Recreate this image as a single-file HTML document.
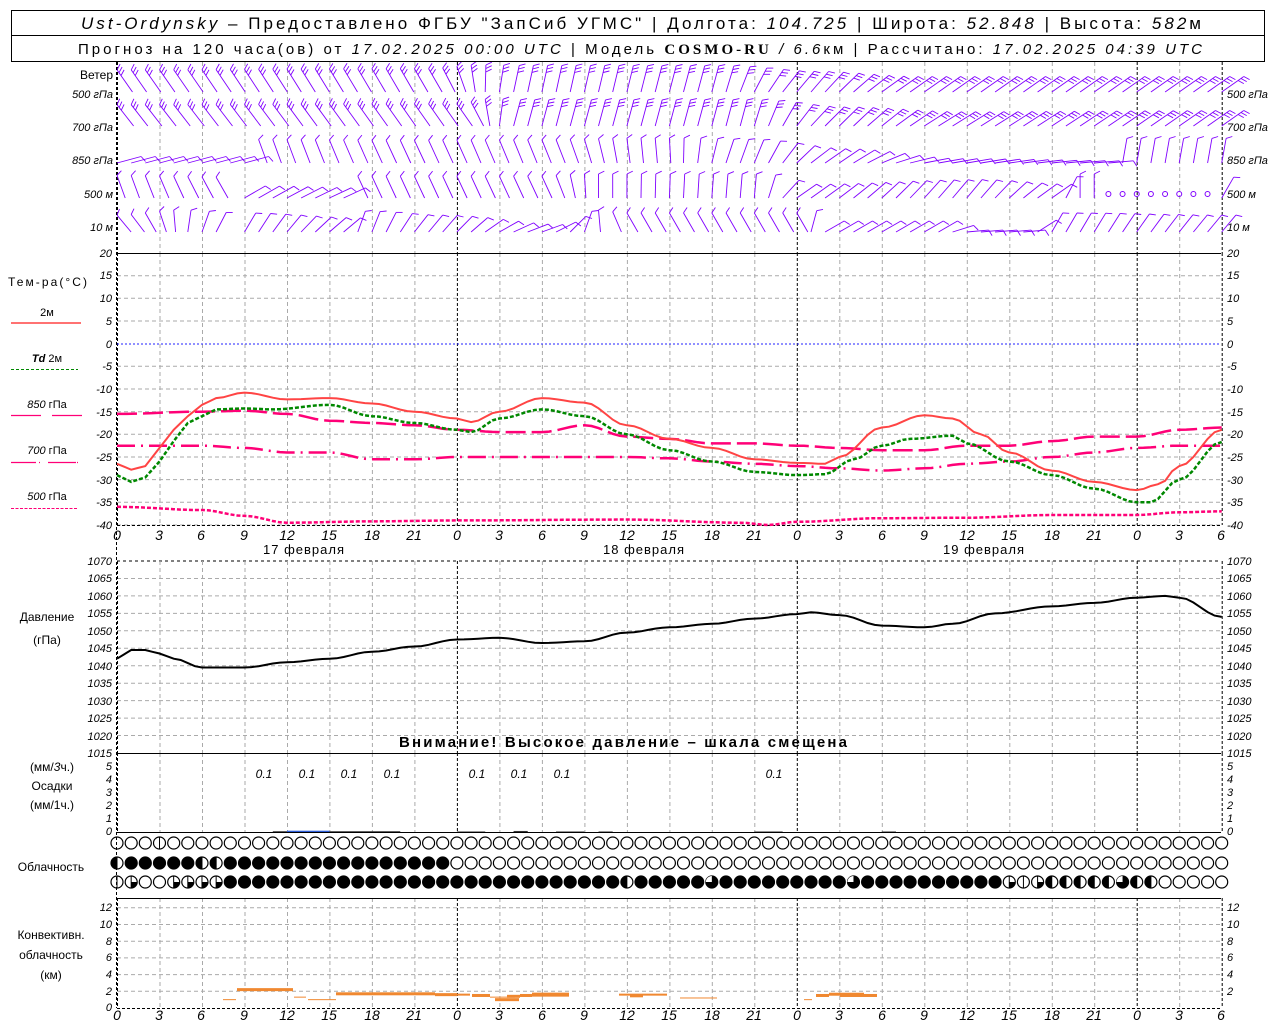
<!DOCTYPE html>
<html><head><meta charset="utf-8">
<style>
html,body{margin:0;padding:0;background:#fff;}
body{width:1280px;height:1024px;overflow:hidden;position:relative;font-family:"Liberation Sans","DejaVu Sans",sans-serif;}
svg{position:absolute;left:0;top:0;}
text{font-family:"Liberation Sans","DejaVu Sans",sans-serif;fill:#000;}
.it{font-style:italic;}
.ax{font-size:11px;font-style:italic;}
.lb{font-size:12px;}
</style></head><body>
<svg id="s" width="1280" height="1024" viewBox="0 0 1280 1024" xmlns="http://www.w3.org/2000/svg">
<g id="g"></g>
<rect x="11.5" y="10.5" width="1253" height="51" fill="none" stroke="#000"/>
<line x1="11" y1="35.5" x2="1265" y2="35.5" stroke="#000"/>
<text x="81" y="29" font-size="17" textLength="1120" lengthAdjust="spacing"><tspan class="it">Ust-Ordynsky</tspan> – Предоставлено ФГБУ "ЗапСиб УГМС" | Долгота: <tspan class="it">104.725</tspan> | Широта: <tspan class="it">52.848</tspan> | Высота: <tspan class="it">582</tspan>м</text>
<text x="78" y="54" font-size="15" textLength="1124" lengthAdjust="spacing">Прогноз на 120 часа(ов) от <tspan class="it">17.02.2025 00:00 UTC</tspan> | Модель <tspan font-weight="bold" font-family="Liberation Serif">COSMO-RU</tspan> <tspan class="it">/ 6.6</tspan>км | Рассчитано: <tspan class="it">17.02.2025 04:39 UTC</tspan></text>

<text x="113" y="79" class="lb" text-anchor="end">Ветер</text>
<g class="ax">
<text x="113" y="98" text-anchor="end">500 гПа</text><text x="113" y="131" text-anchor="end">700 гПа</text><text x="113" y="164" text-anchor="end">850 гПа</text><text x="113" y="198" text-anchor="end">500 м</text><text x="113" y="231" text-anchor="end">10   м</text>
<text x="1227" y="98">500 гПа</text><text x="1227" y="131">700 гПа</text><text x="1227" y="164">850 гПа</text><text x="1227" y="198">500 м</text><text x="1227" y="231">10   м</text>
</g>

<text x="8" y="286" class="lb" textLength="79" lengthAdjust="spacing">Тем-ра(°C)</text>
<text x="47" y="316" font-size="11" text-anchor="middle">2м</text>
<line x1="11" y1="323" x2="81" y2="323" stroke="#f44" stroke-width="1.5"/>
<text x="47" y="362" font-size="11" text-anchor="middle"><tspan class="it" font-weight="bold">Td</tspan>  2м</text>
<line x1="11" y1="369.5" x2="78" y2="369.5" stroke="#080" stroke-dasharray="3,2"/>
<text x="47" y="408" font-size="11" text-anchor="middle"><tspan class="it">850</tspan> гПа</text>
<path d="M11 415.5H41M52 415.5H82" stroke="#f07" stroke-width="1.2"/>
<text x="47" y="454" font-size="11" text-anchor="middle"><tspan class="it">700</tspan> гПа</text>
<path d="M11 462.5H36M39 462.5H40M48 462.5H76M77 462.5H78" stroke="#f07" stroke-width="1.2"/>
<text x="47" y="500" font-size="11" text-anchor="middle"><tspan class="it">500</tspan> гПа</text>
<line x1="11" y1="508.5" x2="78" y2="508.5" stroke="#f07" stroke-dasharray="3,1.5"/>

<g font-size="13" letter-spacing="1">
<text x="304" y="554" text-anchor="middle">17 февраля</text>
<text x="644" y="554" text-anchor="middle">18 февраля</text>
<text x="984" y="554" text-anchor="middle">19 февраля</text>
</g>
<text x="47" y="621" class="lb" text-anchor="middle">Давление</text>
<text x="47" y="644" class="lb" text-anchor="middle">(гПа)</text>
<text x="399" y="747" font-size="15" font-weight="bold" textLength="448" lengthAdjust="spacing">Внимание! Высокое давление – шкала смещена</text>
<text x="52" y="771" class="lb" text-anchor="middle">(мм/<tspan class="it">3</tspan>ч.)</text>
<text x="52" y="790" class="lb" text-anchor="middle">Осадки</text>
<text x="52" y="809" class="lb" text-anchor="middle">(мм/1ч.)</text>
<g font-size="12" class="it" text-anchor="middle">
<text x="264" y="778">0.1</text><text x="307" y="778">0.1</text><text x="349" y="778">0.1</text><text x="392" y="778">0.1</text><text x="477" y="778">0.1</text><text x="519" y="778">0.1</text><text x="562" y="778">0.1</text><text x="774" y="778">0.1</text>
</g>
<text x="51" y="871" class="lb" text-anchor="middle">Облачность</text>
<text x="51" y="939" class="lb" text-anchor="middle">Конвективн.</text>
<text x="51" y="959" class="lb" text-anchor="middle">облачность</text>
<text x="51" y="979" class="lb" text-anchor="middle">(км)</text>
<g style="font-size:14px;font-style:italic" text-anchor="middle">
<text x="117" y="540">0</text><text x="159" y="540">3</text><text x="201" y="540">6</text><text x="244" y="540">9</text><text x="287" y="540">12</text><text x="329" y="540">15</text><text x="372" y="540">18</text><text x="414" y="540">21</text><text x="457" y="540">0</text><text x="499" y="540">3</text><text x="542" y="540">6</text><text x="584" y="540">9</text><text x="627" y="540">12</text><text x="669" y="540">15</text><text x="712" y="540">18</text><text x="754" y="540">21</text><text x="797" y="540">0</text><text x="839" y="540">3</text><text x="882" y="540">6</text><text x="924" y="540">9</text><text x="967" y="540">12</text><text x="1009" y="540">15</text><text x="1052" y="540">18</text><text x="1094" y="540">21</text><text x="1137" y="540">0</text><text x="1179" y="540">3</text><text x="1221" y="540">6</text>
<text x="117" y="1020">0</text><text x="159" y="1020">3</text><text x="201" y="1020">6</text><text x="244" y="1020">9</text><text x="287" y="1020">12</text><text x="329" y="1020">15</text><text x="372" y="1020">18</text><text x="414" y="1020">21</text><text x="457" y="1020">0</text><text x="499" y="1020">3</text><text x="542" y="1020">6</text><text x="584" y="1020">9</text><text x="627" y="1020">12</text><text x="669" y="1020">15</text><text x="712" y="1020">18</text><text x="754" y="1020">21</text><text x="797" y="1020">0</text><text x="839" y="1020">3</text><text x="882" y="1020">6</text><text x="924" y="1020">9</text><text x="967" y="1020">12</text><text x="1009" y="1020">15</text><text x="1052" y="1020">18</text><text x="1094" y="1020">21</text><text x="1137" y="1020">0</text><text x="1179" y="1020">3</text><text x="1221" y="1020">6</text>
</g>
<g class="ax">
<text x="112" y="257" text-anchor="end">20</text><text x="112" y="302" text-anchor="end">10</text><text x="112" y="279" text-anchor="end">15</text><text x="112" y="325" text-anchor="end">5</text><text x="112" y="348" text-anchor="end">0</text><text x="112" y="370" text-anchor="end">-5</text><text x="112" y="393" text-anchor="end">-10</text><text x="112" y="416" text-anchor="end">-15</text><text x="112" y="438" text-anchor="end">-20</text><text x="112" y="461" text-anchor="end">-25</text><text x="112" y="484" text-anchor="end">-30</text><text x="112" y="506" text-anchor="end">-35</text><text x="112" y="529" text-anchor="end">-40</text>
<text x="1227" y="257">20</text><text x="1227" y="279">15</text><text x="1227" y="302">10</text><text x="1227" y="325">5</text><text x="1227" y="348">0</text><text x="1227" y="370">-5</text><text x="1227" y="393">-10</text><text x="1227" y="416">-15</text><text x="1227" y="438">-20</text><text x="1227" y="461">-25</text><text x="1227" y="484">-30</text><text x="1227" y="506">-35</text><text x="1227" y="529">-40</text>
<text x="112" y="565" text-anchor="end">1070</text><text x="112" y="582" text-anchor="end">1065</text><text x="112" y="600" text-anchor="end">1060</text><text x="112" y="617" text-anchor="end">1055</text><text x="112" y="635" text-anchor="end">1050</text><text x="112" y="652" text-anchor="end">1045</text><text x="112" y="670" text-anchor="end">1040</text><text x="112" y="687" text-anchor="end">1035</text><text x="112" y="705" text-anchor="end">1030</text><text x="112" y="722" text-anchor="end">1025</text><text x="112" y="740" text-anchor="end">1020</text><text x="112" y="757" text-anchor="end">1015</text>
<text x="1227" y="565">1070</text><text x="1227" y="582">1065</text><text x="1227" y="600">1060</text><text x="1227" y="617">1055</text><text x="1227" y="635">1050</text><text x="1227" y="652">1045</text><text x="1227" y="670">1040</text><text x="1227" y="687">1035</text><text x="1227" y="705">1030</text><text x="1227" y="722">1025</text><text x="1227" y="740">1020</text><text x="1227" y="757">1015</text>
<text x="112" y="770" text-anchor="end">5</text><text x="112" y="783" text-anchor="end">4</text><text x="112" y="796" text-anchor="end">3</text><text x="112" y="809" text-anchor="end">2</text><text x="112" y="822" text-anchor="end">1</text><text x="112" y="835" text-anchor="end">0</text>
<text x="1227" y="770">5</text><text x="1227" y="783">4</text><text x="1227" y="796">3</text><text x="1227" y="809">2</text><text x="1227" y="822">1</text><text x="1227" y="835">0</text>
<text x="112" y="911" text-anchor="end">12</text><text x="112" y="928" text-anchor="end">10</text><text x="112" y="945" text-anchor="end">8</text><text x="112" y="961" text-anchor="end">6</text><text x="112" y="978" text-anchor="end">4</text><text x="112" y="995" text-anchor="end">2</text><text x="112" y="1011" text-anchor="end">0</text>
<text x="1227" y="911">12</text><text x="1227" y="928">10</text><text x="1227" y="945">8</text><text x="1227" y="961">6</text><text x="1227" y="978">4</text><text x="1227" y="995">2</text>
</g>
</svg>
<script>
(function(){
var g=document.getElementById("g"),out=[];
function X(h){return 117+h*14.163;}
function L(x1,y1,x2,y2,st){out.push('<line x1="'+x1.toFixed(1)+'" y1="'+y1.toFixed(1)+'" x2="'+x2.toFixed(1)+'" y2="'+y2.toFixed(1)+'" '+st+'/>');}
var panels=[[62,253],[253,525],[561,753],[753,832],[898,1008]];
var gray='stroke="#aaa" stroke-dasharray="4,3"';
for(var t=15;t>=-40;t-=5){var y=253+(20-t)*4.533;if(t!=0)L(117,y,1221,y,gray);}
for(var p=1065;p>1015;p-=5){var y=561+(1070-p)*3.4909;L(117,y,1221,y,gray);}
L(117,561,1221,561,'stroke="#000" stroke-dasharray="3,3"');
for(var k=2;k<=12;k+=2){var y=1008-k*8.35;L(117,y,1221,y,gray);}
panels.forEach(function(pn){
 for(var h=0;h<=78;h+=3){
  var day=(h%24==0)||h==78;
  L(X(h)+.5,pn[0],X(h)+.5,pn[1],day?'stroke="#000" stroke-dasharray="3,2"':gray);
 }
});
L(117,344,1221,344,'stroke="#22f" stroke-dasharray="2,2"');
L(117,253.5,1221,253.5,'stroke="#000"');
L(117,753.5,1221,753.5,'stroke="#000"');
L(117,898.5,1221,898.5,'stroke="#000"');
L(117,525.5,1221,525.5,'stroke="#000" stroke-dasharray="3,2"');
L(117,832.5,1221,832.5,'stroke="#000"');
L(117,1008.5,1221,1008.5,'stroke="#000" stroke-dasharray="3,2"');
function interp(d,h){for(var i=0;i<d.length-1;i++){if(h>=d[i][0]&&h<=d[i+1][0]){var f=(h-d[i][0])/(d[i+1][0]-d[i][0]);var s=(1-Math.cos(f*Math.PI))/2;return d[i][1]+(d[i+1][1]-d[i][1])*s;}}return d[d.length-1][1];}
function curve(d,Y,st){var s='';for(var h=0;h<=78;h+=0.5){s+=(h?'L':'M')+X(h).toFixed(1)+' '+Y(interp(d,h)).toFixed(1);}out.push('<path d="'+s+'" fill="none" '+st+'/>');}
function TY(t){return 253+(20-t)*4.533;}
var T2=[[0,-26.5],[1,-27.8],[2,-27],[3,-23],[4,-19],[5,-16],[6,-13.5],[7,-12],[9,-10.8],[12,-12.3],[15,-12],[18,-13.2],[21,-15],[24,-16.5],[25,-17.3],[27,-15],[30,-12],[33,-13],[36,-18],[39,-21],[42,-23],[45,-25.5],[48,-26.3],[50,-26.5],[51,-25],[54,-18.5],[57,-15.8],[59,-16.5],[61,-20],[63,-24],[66,-28],[69,-30.5],[72,-32.3],[73.6,-31],[75,-27],[78,-19]];
var TD=[[0,-29],[1,-30.5],[2,-29.5],[3,-26],[4,-21.5],[5,-17.5],[6,-16],[7,-14.5],[9,-14.3],[11,-14.5],[15,-13.5],[18,-16],[21,-17.5],[24,-19],[25,-19.5],[27,-16.5],[30,-14.5],[33,-16],[36,-20],[39,-23.5],[42,-26],[45,-28.3],[48,-29],[50,-28.8],[52,-25.5],[54,-22.5],[56,-21],[59,-20.3],[60,-22],[63,-26],[66,-29],[69,-32],[72,-35],[73,-35],[75,-30],[78,-21.7]];
var H850=[[0,-15.5],[6,-15],[9,-14.8],[12,-15.5],[15,-17],[18,-17.5],[21,-18],[24,-19],[27,-19.5],[30,-19.5],[33,-18],[36,-20.5],[39,-21],[42,-22],[45,-22],[48,-22.5],[51,-23],[54,-23.5],[57,-23.5],[60,-22.5],[63,-22.5],[66,-21.5],[69,-20.5],[72,-20.5],[75,-19],[78,-18.5]];
var H700=[[0,-22.5],[6,-22.5],[9,-23],[12,-24],[15,-24],[18,-25.5],[21,-25.5],[24,-25],[36,-25],[39,-25.3],[42,-26],[45,-26.5],[48,-27],[51,-27.5],[54,-28],[57,-27.5],[60,-26.5],[63,-26],[66,-25],[69,-24],[72,-23],[75,-22.5],[78,-22.5]];
var H500=[[0,-36],[6,-36.7],[9,-38],[12,-39.5],[18,-39.2],[24,-39],[36,-38.8],[44,-39.5],[46,-40],[48,-39.3],[54,-38.5],[60,-38.4],[66,-37.8],[72,-37.8],[75,-37.2],[78,-37]];
curve(H500,TY,'stroke="#f07" stroke-width="2.5" stroke-dasharray="4,2"');
curve(H700,TY,'stroke="#f07" stroke-width="2.5" stroke-dasharray="18,6,2,6"');
curve(H850,TY,'stroke="#f07" stroke-width="2.5" stroke-dasharray="20,6"');
curve(TD,TY,'stroke="#080" stroke-width="2.5" stroke-dasharray="4,2"');
curve(T2,TY,'stroke="#f44" stroke-width="2"');
var PR=[[0,1042],[1,1044.5],[2,1044.5],[3,1043.5],[4,1042],[6,1039.5],[9,1039.5],[12,1041],[15,1042],[18,1044],[21,1045.5],[24,1047.5],[27,1048],[30,1046.5],[33,1047],[36,1049.5],[39,1051],[42,1052],[45,1053.5],[48,1054.8],[49,1055.3],[51,1054.5],[54,1051.5],[57,1051],[59,1052],[62,1055],[66,1057],[69,1058],[72,1059.5],[74,1060],[75,1059.5],[78,1054]];
curve(PR,function(p){return 561+(1070-p)*3.4909;},'stroke="#000" stroke-width="2"');
[[11,12,0.3],[12,15,0.5],[15,20,0.3],[24,26,0.2],[28,29,0.4],[31,33,0.2],[34,35,0.2],[45,47,0.2],[54,55,0.2]].forEach(function(b){out.push('<rect x="'+X(b[0])+'" y="'+(832-b[2]*2.6)+'" width="'+(X(b[1])-X(b[0]))+'" height="'+(b[2]*2.6)+'" fill="'+(b[2]>0.4?'#2a5bd7':'#333')+'"/>');});
[[223,236,1.0,1],[237,293,2.2,3],[294,306,1.3,1],[308,336,1.0,1],[336,435,1.7,3],[435,457,1.6,3],[457,470,1.6,2],[472,490,1.5,3],[490,515,1.3,1],[495,519,1.0,3],[507,520,1.4,3],[520,532,1.5,3],[532,569,1.6,4],[619,643,1.6,2],[630,643,1.4,2],[643,667,1.6,2],[680,717,1.2,1],[804,812,1.0,1],[816,829,1.5,3],[829,864,1.65,3],[840,877,1.5,3]].forEach(function(b){var y=1008-b[2]*8.35;out.push('<rect x="'+b[0]+'" y="'+(y-b[3]/2)+'" width="'+(b[1]-b[0])+'" height="'+b[3]+'" fill="#f08830"/>');});
var r1='',r2='',r3='';
for(var i=0;i<79;i++){r1+=(i==3?'L':'E');}
for(i=0;i<79;i++){r2+=(i<24?((i==0||i==6||i==7)?'H':'F'):'E');}
r3='LQEEQQQQ'; for(i=8;i<63;i++){r3+=(i==36?'H':(i==42||i==52)?'C':'F');}
r3+='QLQHHHHHCHHEEEE';
function circ(cx,cy,t){var r=6;var s='<circle cx="'+cx.toFixed(1)+'" cy="'+cy+'" r="'+r+'" fill="'+(t=='F'||t=='C'?'#000':'#fff')+'" stroke="#000" stroke-width="1.2"/>';
 if(t=='H')s+='<path d="M'+cx+' '+(cy-r)+'A'+r+' '+r+' 0 0 0 '+cx+' '+(cy+r)+'Z" fill="#000"/><line x1="'+cx+'" y1="'+(cy-r)+'" x2="'+cx+'" y2="'+(cy+r)+'" stroke="#000"/>';
 if(t=='L')s+='<line x1="'+cx+'" y1="'+(cy-r)+'" x2="'+cx+'" y2="'+(cy+r)+'" stroke="#000"/>';
 if(t=='Q')s+='<path d="M'+cx+' '+cy+'L'+cx+' '+(cy+r)+'A'+r+' '+r+' 0 0 0 '+(cx+r)+' '+cy+'Z" fill="#000"/><line x1="'+cx+'" y1="'+(cy-r)+'" x2="'+cx+'" y2="'+(cy+r)+'" stroke="#000"/>';
 if(t=='C')s+='<path d="M'+cx+' '+cy+'L'+cx+' '+(cy-r)+'A'+r+' '+r+' 0 0 0 '+(cx-r)+' '+cy+'Z" fill="#fff"/>';
 return s;}
for(i=0;i<79;i++){out.push(circ(X(i),843,r1[i]));out.push(circ(X(i),863,r2[i]));out.push(circ(X(i),882,r3[i]));}
var rows=[
 {y:92,len:27,nf:3,a:[[0,35],[22,30],[28,-12],[42,-15],[48,-40],[55,-55],[78,-55]]},
 {y:126,len:27,nf:3,a:[[0,38],[24,35],[28,-15],[44,-15],[50,-45],[58,-58],[78,-55]]},
 {y:163,len:25,nf:1,a:[[0,-75],[9,-75],[10,20],[20,25],[30,22],[38,5],[44,-20],[50,-55],[58,-80],[70,-85],[71,-10],[78,-10]]},
 {y:198,len:24,nf:1,a:[[0,20],[8,30],[9,-60],[16,-65],[17,25],[30,25],[34,0],[45,-5],[48,-55],[60,-40],[66,-55],[68,0],[69,0],[78,-30]]},
 {y:232,len:22,nf:1,a:[[0,40],[8,-30],[16,-50],[17,-20],[22,-40],[30,-70],[36,30],[48,30],[50,-60],[58,-60],[60,-85],[64,-85],[66,-30],[78,-40]]}
];
rows.forEach(function(rw,ri){
 for(var h=0;h<=78;h++){
  if(ri>=3&&h>=8&&h<9)continue;
  if(ri==3&&h>=70&&h<78){out.push('<circle cx="'+X(h)+'" cy="'+(rw.y-4)+'" r="2.5" fill="none" stroke="#8000ff"/>');continue;}
  var a=interp(rw.a,h)*Math.PI/180;
  var ux=-Math.sin(a),uy=-Math.cos(a);
  var x0=X(h)+(a>0?rw.len*Math.sin(a):0),y0=rw.y;
  var tx=x0+ux*rw.len,ty=y0+uy*rw.len;
  L(x0,y0,tx,ty,'stroke="#8000ff" stroke-width="0.9"');
  var fx=ux*Math.cos(1.1)-uy*Math.sin(1.1),fy=ux*Math.sin(1.1)+uy*Math.cos(1.1);
  for(var f=0;f<rw.nf;f++){var bx=tx-ux*f*3.5,by=ty-uy*f*3.5;L(bx,by,bx+fx*6.5,by+fy*6.5,'stroke="#8000ff" stroke-width="0.9"');}
 }
});
L(116.5,62,116.5,1008,'stroke="#000" stroke-dasharray="3,2"');
g.innerHTML=out.join('');
})();
</script>
</body></html>
